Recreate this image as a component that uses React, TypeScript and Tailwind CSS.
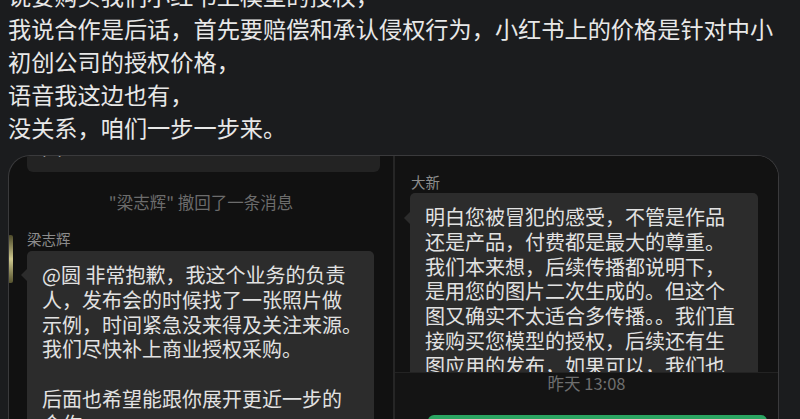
/**
 * Post text with two stacked chat screenshots (dark mode)
 */

const FONT = '"Noto Sans CJK SC", "Noto Sans", "Liberation Sans", sans-serif';

const POST_LINES = [
  '说要购买我们小红书上模型的授权，',
  '我说合作是后话，首先要赔偿和承认侵权行为，小红书上的价格是针对中小',
  '初创公司的授权价格，',
  '语音我这边也有，',
  '没关系，咱们一步一步来。',
];

const LEFT_LINES = [
  '@圆 非常抱歉，我这个业务的负责',
  '人，发布会的时候找了一张照片做',
  '示例，时间紧急没来得及关注来源。',
  '我们尽快补上商业授权采购。',
  '',
  '后面也希望能跟你展开更近一步的',
  '合作。',
];

const RIGHT_LINES = [
  '明白您被冒犯的感受，不管是作品',
  '还是产品，付费都是最大的尊重。',
  '我们本来想，后续传播都说明下，',
  '是用您的图片二次生成的。但这个',
  '图又确实不太适合多传播。。我们直',
  '接购买您模型的授权，后续还有生',
  '图应用的发布，如果可以，我们也',
];

function Bubble({ lines, arrowTop }: { lines: string[]; arrowTop: string }) {
  return (
    <div className="relative rounded-[5px] bg-[#2c2c2c]">
      <span
        className={`absolute -left-[6px] ${arrowTop} h-0 w-0 border-y-[6px] border-r-[6px] border-y-transparent border-r-[#2c2c2c]`}
      />
      <div className="pl-[15px] pt-[12px] text-[20px] leading-[24.8px] text-[#e2e2e2]">
        {lines.map((l, i) => (
          <div key={i} className="h-[24.8px] whitespace-nowrap">
            {l}
          </div>
        ))}
      </div>
    </div>
  );
}

export default function App() {
  return (
    <div
      className="flex h-[419px] w-[800px] flex-col overflow-hidden bg-[#1b1c1e]"
      style={{ fontFamily: FONT }}
    >
      {/* post text */}
      <div className="-mt-[21px] shrink-0 pl-[8px] text-[23.2px] leading-[33px] text-[#e8e8e8]">
        {POST_LINES.map((l) => (
          <div key={l} className="h-[33px] whitespace-nowrap">
            {l}
          </div>
        ))}
      </div>

      {/* screenshots */}
      <div className="ml-[8px] mt-[11px] flex w-[771px] flex-1 overflow-hidden rounded-t-[22px] border border-b-0 border-[#3a3a3c] bg-[#111111]">
        {/* left chat */}
        <div className="relative flex w-[384px] shrink-0 flex-col">
          <span className="absolute -left-[1px] top-[79px] h-[48px] w-[5px] rounded-[2px] bg-gradient-to-b from-[#4d4a2a] via-[#cfc98f] to-[#56532f]" />
          <div className="ml-[18px] h-[16px] w-[353px] shrink-0 overflow-hidden rounded-b-[6px] bg-[#232323]">
            <div className="-mt-[22px] pl-[15px] text-[20px] leading-[26px] text-[#bdbdbd]">图</div>
          </div>
          <div className="mt-[20px] shrink-0 text-center text-[16.5px] leading-[20px] text-[#6c6c6c]">
            "梁志辉" 撤回了一条消息
          </div>
          <div className="mt-[18px] shrink-0 pl-[18px] text-[14.5px] leading-[18px] text-[#8c8c8c]">梁志辉</div>
          <div className="ml-[18px] mt-[3px] w-[347px] shrink-0">
            <Bubble lines={LEFT_LINES} arrowTop="top-[18px]" />
          </div>
        </div>

        <div className="w-[2px] shrink-0 bg-[#262626]" />

        {/* right chat */}
        <div className="flex flex-1 flex-col bg-[#121212]">
          <div className="min-h-0 flex-1 overflow-hidden">
            <div className="pl-[16px] pt-[17px] text-[14.5px] leading-[18px] text-[#8c8c8c]">大新</div>
            <div className="ml-[15px] mt-[2px] w-[348px]">
              <Bubble lines={RIGHT_LINES} arrowTop="top-[19px]" />
            </div>
          </div>
          <div className="h-[47px] shrink-0 border-t border-[#232323] bg-[#141414]">
            <div className="text-center text-[16.5px] leading-[20px] text-[#6e6e6e]">昨天 13:08</div>
            <div className="ml-[33px] mr-[11px] mt-[22px] h-[20px] rounded-t-[6px] bg-[#2ba562]" />
          </div>
        </div>
      </div>
    </div>
  );
}
